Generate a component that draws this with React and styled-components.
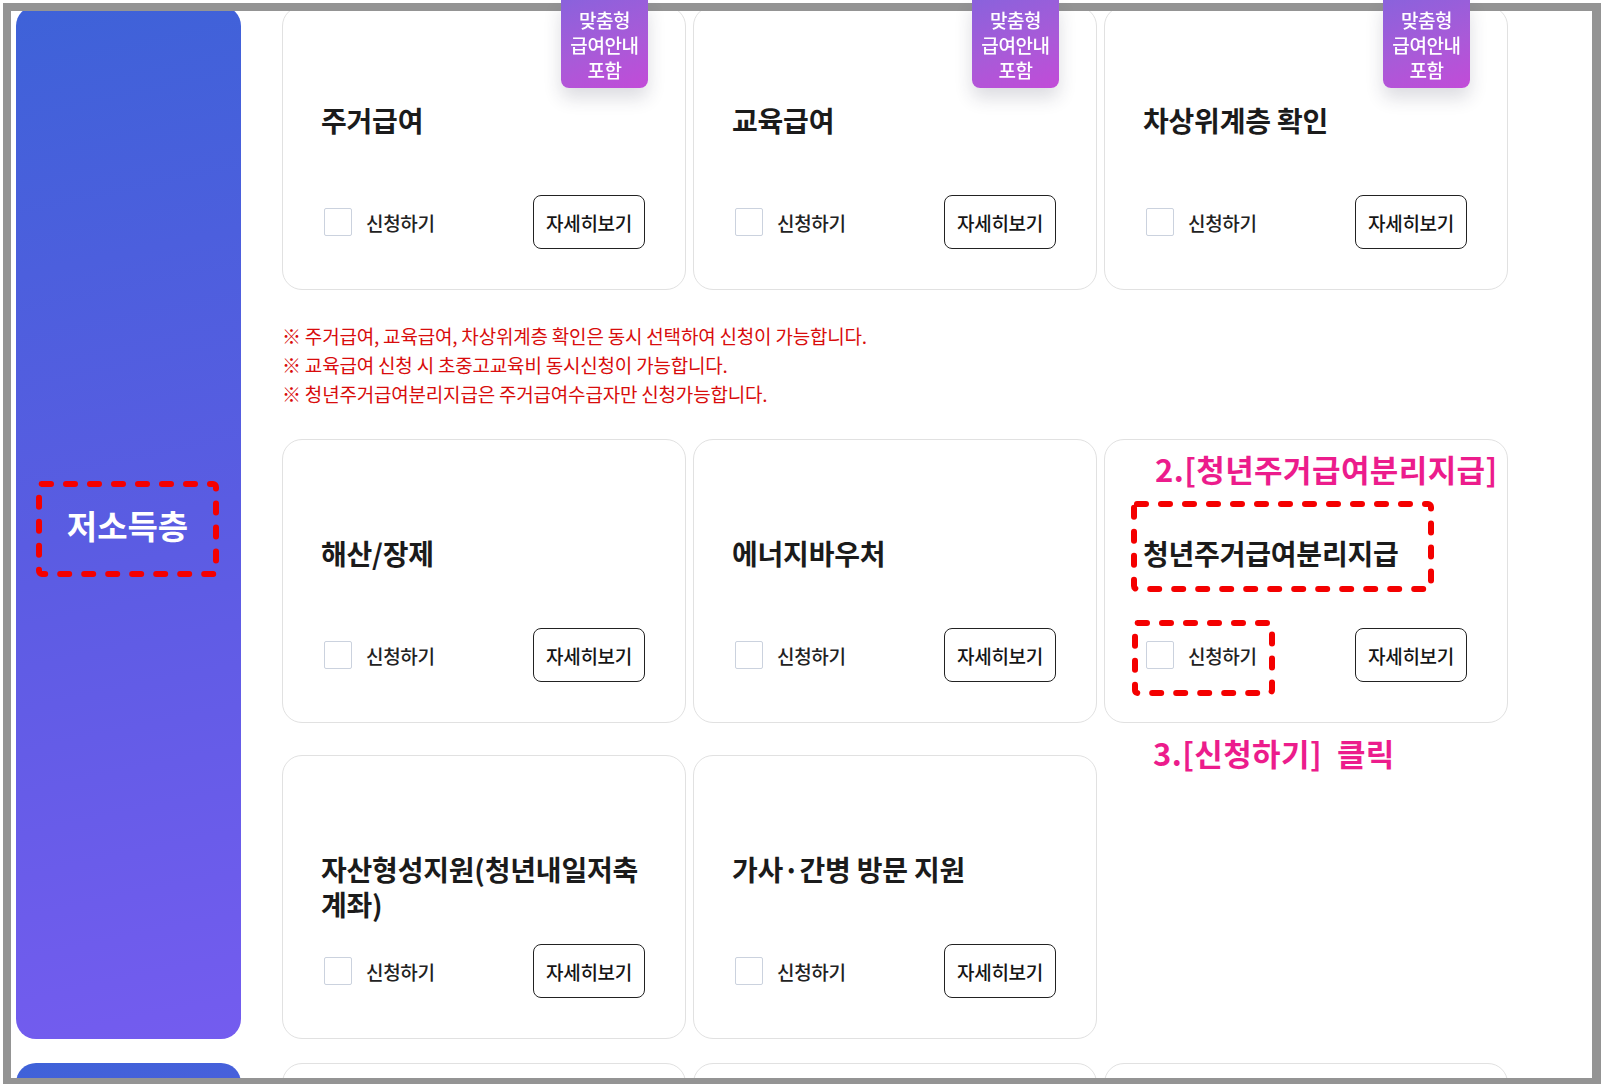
import React from 'react'
import styled, { createGlobalStyle } from 'styled-components'

const GlobalStyle = createGlobalStyle`
  html, body {
    margin: 0;
    padding: 0;
    background: #fff;
    overflow: hidden;
  }
  body {
    font-family: 'Noto Sans CJK KR', 'Noto Sans', sans-serif;
    color: #1b1b1b;
  }
  * {
    box-sizing: border-box;
  }
`

const ROW_ONE = ['주거급여', '교육급여', '차상위계층 확인']

const NOTES = [
  '※ 주거급여, 교육급여, 차상위계층 확인은 동시 선택하여 신청이 가능합니다.',
  '※ 교육급여 신청 시 초중고교육비 동시신청이 가능합니다.',
  '※ 청년주거급여분리지급은 주거급여수급자만 신청가능합니다.',
]

const DashBox = ({ w, h, top, left }) => (
  <DashSvg width={w} height={h} $top={top} $left={left}>
    <rect
      x="3"
      y="3"
      width={w - 6}
      height={h - 6}
      rx="3"
      fill="none"
      stroke="#f40000"
      strokeWidth="6"
      strokeDasharray="9 15"
      strokeLinecap="round"
    />
  </DashSvg>
)

const Card = ({ title, badge, markTitle, markCheck, children }) => (
  <CardBox>
    {badge && (
      <Badge>
        맞춤형
        <br />
        급여안내
        <br />
        포함
      </Badge>
    )}
    <Title>
      {markTitle ? (
        <Marked>
          {title}
          <DashBox w={303} h={91} top={-35} left={-12} />
        </Marked>
      ) : (
        title
      )}
    </Title>
    <Actions>
      <CheckLabel>
        <Check type="checkbox" />
        신청하기
        {markCheck && <DashBox w={143} h={76} top={-21} left={-14} />}
      </CheckLabel>
      <DetailButton>자세히보기</DetailButton>
    </Actions>
    {children}
  </CardBox>
)

const App = () => {
  return (
    <>
      <GlobalStyle />
      <Page>
        <Section>
          <Sidebar>
            <SideLabel>
              저소득층
              <DashBox w={183} h={96} top={0} left={0} />
            </SideLabel>
          </Sidebar>
          <Content>
            <CardGrid>
              {ROW_ONE.map((t) => (
                <Card key={t} title={t} badge />
              ))}
            </CardGrid>
            <Notes>
              {NOTES.map((n) => (
                <li key={n}>{n}</li>
              ))}
            </Notes>
            <CardGrid>
              <Card title="해산/장제" />
              <Card title="에너지바우처" />
              <Card title="청년주거급여분리지급" markTitle markCheck>
                <Callout $top={11} $left={50}>
                  2.[청년주거급여분리지급]
                </Callout>
                <Callout $top={295} $left={48}>
                  3.[신청하기]&nbsp;&nbsp;클릭
                </Callout>
              </Card>
              <Card title="자산형성지원(청년내일저축 계좌)" />
              <Card title="가사·간병 방문 지원" />
            </CardGrid>
          </Content>
        </Section>
        <Section>
          <Sidebar />
          <Content>
            <CardGrid>
              <EmptyCard />
              <EmptyCard />
              <EmptyCard />
            </CardGrid>
          </Content>
        </Section>
      </Page>
      <Frame />
    </>
  )
}

const Page = styled.div`
  display: flex;
  flex-direction: column;
  gap: 24px;
  height: 1084px;
  padding: 6px 0 0 16px;
  overflow: hidden;
`

const Frame = styled.div`
  position: fixed;
  top: 3px;
  left: 3px;
  right: 0;
  bottom: -2px;
  border: solid #949494;
  border-width: 8px 9px 8px 8px;
  pointer-events: none;
  z-index: 5;
`

const Section = styled.div`
  display: flex;
  gap: 41px;
  flex-shrink: 0;
`

const Sidebar = styled.div`
  width: 225px;
  min-height: 300px;
  flex-shrink: 0;
  display: flex;
  align-items: center;
  justify-content: center;
  border-radius: 20px;
  background: linear-gradient(168deg, #3e62d8 0%, #5a5ce2 50%, #745cef 100%);
`

const SideLabel = styled.div`
  position: relative;
  width: 183px;
  height: 96px;
  margin: 13px 2px 0 0;
  padding-top: 25px;
  font-size: 33px;
  line-height: 38px;
  font-weight: 700;
  color: #fff;
  text-align: center;
`

const Content = styled.div`
  width: 1226px;
  display: flex;
  flex-direction: column;
`

const CardGrid = styled.div`
  display: grid;
  grid-template-columns: repeat(3, 404px);
  column-gap: 7px;
  row-gap: 32px;
`

const CardBox = styled.div`
  position: relative;
  height: 284px;
  display: flex;
  flex-direction: column;
  justify-content: space-between;
  padding: 96px 40px 40px 40px;
  border: 1px solid #e1e1e1;
  border-radius: 20px;
  background: #fff;
`

const EmptyCard = styled(CardBox)``

const Badge = styled.div`
  position: absolute;
  top: -7px;
  right: 37px;
  width: 87px;
  padding: 7px 0 6px;
  border-radius: 0 0 8px 8px;
  background: linear-gradient(160deg, #8a62dc 0%, #a95ad8 55%, #c24bd8 100%);
  box-shadow: 0 10px 18px rgba(40, 40, 70, 0.16);
  color: #fff;
  font-size: 19px;
  line-height: 25px;
  font-weight: 500;
  text-align: center;
  letter-spacing: -0.4px;
  z-index: 10;
`

const Title = styled.h3`
  margin: 0 -12px 0 -2px;
  font-size: 28px;
  line-height: 35px;
  font-weight: 700;
  color: #1b1b1b;
  letter-spacing: -0.2px;
  word-break: keep-all;
`

const Marked = styled.span`
  position: relative;
  display: inline-block;
`

const Actions = styled.div`
  display: flex;
  align-items: center;
  justify-content: space-between;
`

const CheckLabel = styled.label`
  position: relative;
  display: inline-flex;
  align-items: center;
  gap: 14px;
  margin-left: 1px;
  font-size: 19px;
  font-weight: 500;
  color: #222;
  letter-spacing: -0.3px;
`

const Check = styled.input`
  appearance: none;
  margin: 0;
  width: 28px;
  height: 28px;
  border: 1.5px solid #cbd2de;
  border-radius: 2px;
  background: #fff;
`

const DetailButton = styled.button`
  width: 112px;
  height: 54px;
  padding: 0;
  border: 1px solid #222;
  border-radius: 8px;
  background: #fff;
  font-family: inherit;
  font-size: 19px;
  font-weight: 500;
  color: #151515;
  letter-spacing: -0.3px;
`

const DashSvg = styled.svg`
  position: absolute;
  top: ${({ $top }) => $top}px;
  left: ${({ $left }) => $left}px;
  overflow: visible;
  pointer-events: none;
`

const Notes = styled.ul`
  list-style: none;
  margin: 31px 0 31px;
  padding: 0;
  font-size: 19px;
  line-height: 29px;
  color: #d80c0c;
  letter-spacing: -0.2px;
`

const Callout = styled.div`
  position: absolute;
  top: ${({ $top }) => $top}px;
  left: ${({ $left }) => $left}px;
  font-size: 31px;
  line-height: 36px;
  font-weight: 700;
  color: #ec1c8c;
  white-space: nowrap;
  letter-spacing: 0.4px;
`

export default App
